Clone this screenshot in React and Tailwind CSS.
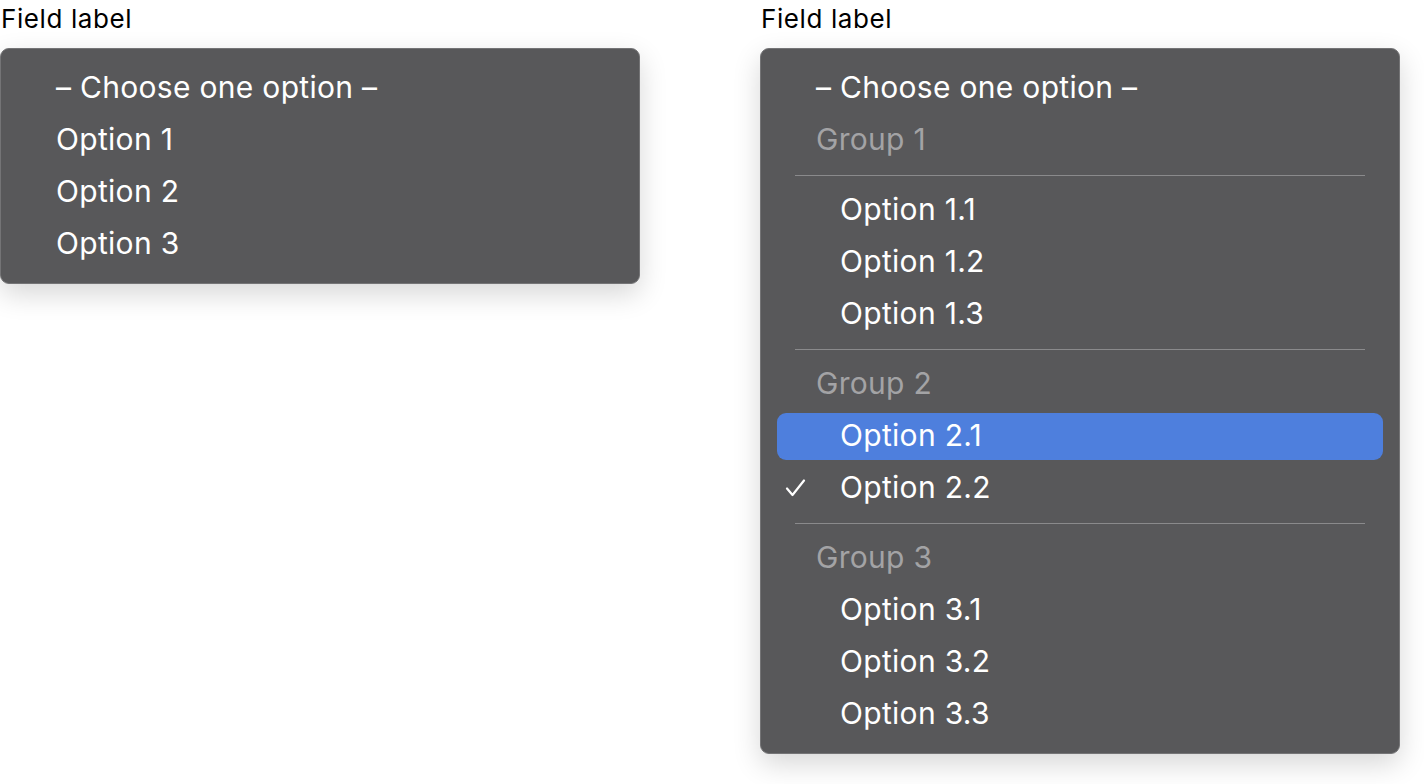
const font = { fontFamily: 'Inter, "Noto Sans", sans-serif' }

function Row({ children, indent, muted, active, checked }) {
  return (
    <div className="relative h-[52px] flex items-center pb-[2px]">
      {active && <div className="absolute left-[16px] right-[16px] top-[3px] bottom-[2px] rounded-[9px] bg-[#4e7fdd]" />}
      {checked && (
        <svg className="absolute left-[24px] top-[17px]" width="21" height="18" viewBox="0 0 21 18" fill="none">
          <path d="M2 9.5 L7.5 16 L19 1.5" stroke="white" strokeWidth="2.2" strokeLinecap="round" strokeLinejoin="round" />
        </svg>
      )}
      <span
        className={`relative text-[30px] leading-none tracking-[0.3px] ${indent ? 'pl-[79px]' : 'pl-[55px]'} ${muted ? 'text-[#a3a3a5]' : 'text-white'}`}
      >
        {children}
      </span>
    </div>
  )
}

function Sep() {
  return (
    <div className="h-[18px] flex items-center px-[34px]">
      <div className="h-px w-full bg-[#8a8a8c]" />
    </div>
  )
}

function Field({ children }) {
  return (
    <div className="w-[640px]">
      <div className="h-[38px] pl-[1px] pt-[4px] text-[26px] leading-[30px] tracking-[0.6px] text-black">Field label</div>
      <div className="mt-[10px] rounded-[9px] border border-[#747476] bg-[#58585a] py-[13px] shadow-[0_10px_28px_rgba(0,0,0,0.16)]">
        {children}
      </div>
    </div>
  )
}

export default function App() {
  return (
    <div className="w-[1424px] h-[784px] bg-white flex gap-[120px]" style={font}>
      <Field>
        <Row>– Choose one option –</Row>
        <Row>Option 1</Row>
        <Row>Option 2</Row>
        <Row>Option 3</Row>
      </Field>
      <Field>
        <Row>– Choose one option –</Row>
        <Row muted>Group 1</Row>
        <Sep />
        <Row indent>Option 1.1</Row>
        <Row indent>Option 1.2</Row>
        <Row indent>Option 1.3</Row>
        <Sep />
        <Row muted>Group 2</Row>
        <Row indent active>Option 2.1</Row>
        <Row indent checked>Option 2.2</Row>
        <Sep />
        <Row muted>Group 3</Row>
        <Row indent>Option 3.1</Row>
        <Row indent>Option 3.2</Row>
        <Row indent>Option 3.3</Row>
      </Field>
    </div>
  )
}
